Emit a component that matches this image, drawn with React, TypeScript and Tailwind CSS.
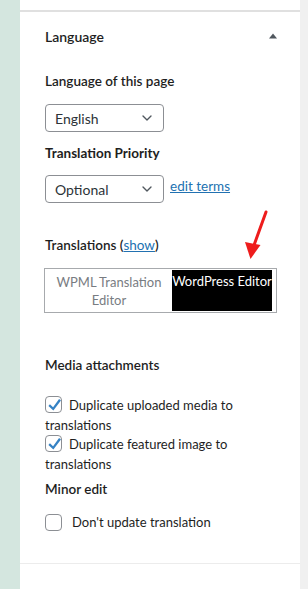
import { ChevronDown } from 'lucide-react'

const font = { fontFamily: 'Lato, "Noto Sans", sans-serif' }

function Select({ value }: { value: string }) {
  return (
    <div className="flex h-[28px] w-[119px] items-center justify-between rounded-[4px] border border-[#8c8f94] bg-white pl-[9px] pr-[8px] text-[14px] text-[#2c3338]">
      <span>{value}</span>
      <ChevronDown size={16} strokeWidth={2} className="text-[#50575e]" />
    </div>
  )
}

function Check({ checked }: { checked: boolean }) {
  return (
    <span className="relative flex h-[17px] w-[17px] shrink-0 items-center justify-center rounded-[4px] border border-[#8c8f94] bg-white">
      {checked && (
        <svg width="19" height="19" viewBox="0 0 20 20" className="absolute left-[-1px] top-[-2px]">
          <path
            d="M14.8 4.2L16.8 5.7 8.8 16.3 3.6 11.6 5.2 9.8 8.5 12.8z"
            fill="#3582c4"
          />
        </svg>
      )}
    </span>
  )
}

export default function App() {
  return (
    <div
      className="flex h-[589px] w-[308px] overflow-hidden bg-[#f0f0f0] text-[#1e1e1e]"
      style={font}
    >
      <div className="w-[20px] shrink-0 bg-[#d4e6df]" />
      <div className="flex w-[280px] shrink-0 flex-col bg-white">
        <div className="h-[12px] shrink-0 border-b-2 border-[#e0e0e0]" />
        <div className="flex flex-col border-b border-[#ececec] px-[25px] pb-[31px]">
          <div className="flex h-[48px] items-center justify-between">
            <span className="text-[14px] font-semibold">Language</span>
            <svg width="10" height="8" viewBox="0 0 10 8" className="mr-[-3px]">
              <path d="M5 1.5L9 6.5H1z" fill="#50575e" />
            </svg>
          </div>
          <p className="mt-[11px] text-[13.5px] font-semibold leading-[20px]">
            Language of this page
          </p>
          <div className="mt-[13px]">
            <Select value="English" />
          </div>
          <p className="mt-[11px] text-[13.5px] font-bold leading-[20px]">
            Translation Priority
          </p>
          <div className="mt-[12px] flex items-start gap-[6px]">
            <Select value="Optional" />
            <a className="mt-[1px] text-[13.5px] leading-[20px] text-[#2271b1] underline">
              edit terms
            </a>
          </div>
          <p className="mt-[32px] text-[13.5px] font-semibold leading-[20px]">
            Translations (
            <a className="font-normal text-[#2271b1] underline">show</a>)
          </p>
          <div className="relative mt-[13px] ml-[-1px] flex h-[45px] w-[233px] border border-[#a7aaad] p-[1px]">
            <div className="flex w-[126px] items-center justify-center text-center text-[13px] leading-[18px] text-[#787c82]">
              WPML Translation
              <br />
              Editor
            </div>
            <div className="mr-[3px] flex flex-1 items-start justify-center whitespace-nowrap bg-black pt-[2px] text-[13px] leading-[18px] text-white">
              WordPress Editor
            </div>
            <svg
              className="absolute left-[196px] top-[-59px]"
              width="30"
              height="52"
              viewBox="0 0 30 52"
            >
              <path d="M25 2L12 38" stroke="#ee1c1c" strokeWidth="3" strokeLinecap="round" />
              <path d="M4 32L9.5 49 19.5 35z" fill="#ee1c1c" />
            </svg>
          </div>
          <p className="mt-[42px] text-[13.5px] font-semibold leading-[20px]">
            Media attachments
          </p>
          <div className="mt-[20px] text-[13px] leading-[20px]">
            <span className="inline-flex align-[-3px]">
              <Check checked />
            </span>
            <span className="ml-[7px]">Duplicate uploaded media to translations</span>
          </div>
          <div className="mt-[-1px] text-[13px] leading-[20px]">
            <span className="inline-flex align-[-3px]">
              <Check checked />
            </span>
            <span className="ml-[7px]">Duplicate featured image to translations</span>
          </div>
          <p className="mt-[5px] text-[13.5px] font-semibold leading-[20px]">Minor edit</p>
          <div className="mt-[13px] flex items-center text-[13px] leading-[20px]">
            <Check checked={false} />
            <span className="ml-[10px]">Don't update translation</span>
          </div>
        </div>
      </div>
    </div>
  )
}
